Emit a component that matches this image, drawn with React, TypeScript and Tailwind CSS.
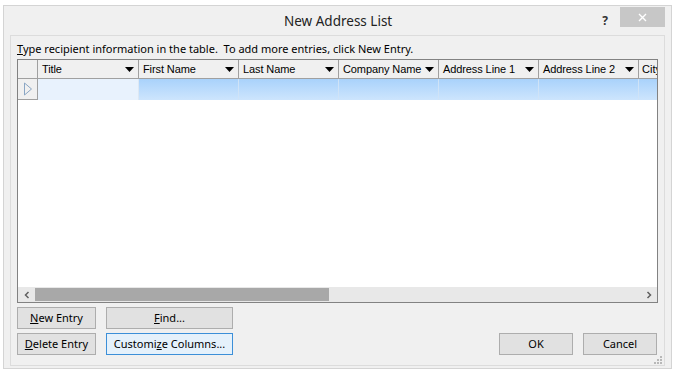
import React from "react";

const columns = [
  { name: "Title", w: "w-[101px]" },
  { name: "First Name", w: "w-[100px]" },
  { name: "Last Name", w: "w-[100px]" },
  { name: "Company Name", w: "w-[100px]" },
  { name: "Address Line 1", w: "w-[100px]" },
  { name: "Address Line 2", w: "w-[100px]" },
];

function DropArrow() {
  return (
    <svg width="9" height="5" viewBox="0 0 9 5" className="shrink-0">
      <path d="M0 0 H9 L4.5 5 Z" fill="#000" />
    </svg>
  );
}

function Btn({ children, w, focused }: { children: React.ReactNode; w: string; focused?: boolean }) {
  return (
    <button
      className={`${w} h-[22px] flex items-center justify-center text-[11px] text-black border ${
        focused ? "border-[#3c8fd8] bg-[#e5f1fb]" : "border-[#adadad] bg-[#e1e1e1]"
      }`}
    >
      {children}
    </button>
  );
}

export default function App() {
  return (
    <div className="w-[681px] h-[373px] bg-white pl-[3px] pt-[5px] font-['Noto_Sans','Open_Sans',sans-serif]">
      <div className="w-[669px] h-[364px] border border-[#d4d4d4] bg-[#f0f0f0] flex flex-col">
        {/* title bar */}
        <div className="h-[29px] flex items-start shrink-0">
          <div className="flex-1 pt-[5px] text-center text-[13.5px] text-[#222] pl-[70px]">New Address List</div>
          <div className="pt-[6px] pr-[6px] font-bold text-[12px] text-[#333] mr-[6px]">?</div>
          <div className="w-[45px] h-[20px] mt-[1px] mr-[6px] bg-[#c7c7c7] flex items-center justify-center">
            <svg width="9" height="9" viewBox="0 0 9 9">
              <path d="M1 1 L8 8 M8 1 L1 8" stroke="#fff" strokeWidth="1.4" />
            </svg>
          </div>
        </div>

        {/* inner panel */}
        <div className="mx-[6px] mb-[4px] flex-1 border border-[#dcdcdc] bg-[#f0f0f0] px-[6px] flex flex-col">
          <div className="h-[23px] pt-[6px] text-[11px] leading-[13px] text-black whitespace-nowrap">
            <span className="underline">T</span>ype recipient information in the table.&nbsp; To add more entries, click New Entry.
          </div>

          {/* table */}
          <div className="w-[641px] h-[244px] border border-[#828282] bg-white flex flex-col font-['Liberation_Sans',sans-serif] overflow-hidden">
            <div className="flex h-[19px] shrink-0 bg-[#f0f0f0]">
              <div className="w-[20px] shrink-0 border-r border-b border-[#a0a0a0]" />
              {columns.map((c) => (
                <div
                  key={c.name}
                  className={`${c.w} shrink-0 border-r border-b border-[#a0a0a0] flex items-center justify-between gap-[3px] pl-[4px] pr-[4px] text-[11px] tracking-[-0.1px] text-black whitespace-nowrap`}
                >
                  <span>{c.name}</span>
                  <DropArrow />
                </div>
              ))}
              <div className="flex-1 border-b border-[#a0a0a0] pl-[3px] text-[11px] leading-[19px] overflow-hidden whitespace-nowrap">City</div>
            </div>
            <div className="flex h-[21px] shrink-0">
              <div className="w-[20px] shrink-0 border-r border-b border-[#a0a0a0] bg-[#f0f0f0] flex items-center justify-center">
                <svg width="10" height="14" viewBox="0 0 10 14">
                  <path d="M1.5 1 L8.5 7 L1.5 13 Z" fill="none" stroke="#8aa6c4" strokeWidth="1" />
                </svg>
              </div>
              <div className="w-[101px] shrink-0 border-r border-[#dde8f3] bg-[#e8f2fd]" />
              {columns.slice(1).map((c) => (
                <div
                  key={c.name}
                  className={`${c.w} shrink-0 border-r border-[#cfe3f7] bg-gradient-to-b from-[#a9d2fb] to-[#cde5fd]`}
                />
              ))}
              <div className="flex-1 bg-gradient-to-b from-[#a9d2fb] to-[#cde5fd]" />
            </div>
            <div className="flex-1" />
            {/* horizontal scrollbar */}
            <div className="h-[15px] flex shrink-0 bg-[#e8e8e8]">
              <div className="w-[17px] flex items-center justify-center">
                <svg width="6" height="8" viewBox="0 0 6 8">
                  <path d="M4.5 1 L1.5 4 L4.5 7" fill="none" stroke="#606060" strokeWidth="1.5" />
                </svg>
              </div>
              <div className="w-[294px] my-[1px] bg-[#a8a8a8]" />
              <div className="flex-1" />
              <div className="w-[17px] flex items-center justify-center">
                <svg width="6" height="8" viewBox="0 0 6 8">
                  <path d="M1.5 1 L4.5 4 L1.5 7" fill="none" stroke="#606060" strokeWidth="1.5" />
                </svg>
              </div>
            </div>
          </div>

          {/* buttons */}
          <div className="flex mt-[4px]">
            <div className="flex flex-col gap-[4px]">
              <Btn w="w-[79px]">
                <span><span className="underline">N</span>ew Entry</span>
              </Btn>
              <Btn w="w-[79px]">
                <span><span className="underline">D</span>elete Entry</span>
              </Btn>
            </div>
            <div className="flex flex-col gap-[4px] ml-[10px]">
              <Btn w="w-[127px]">
                <span><span className="underline">F</span>ind...</span>
              </Btn>
              <Btn w="w-[127px]" focused>
                <span>Customi<span className="underline">z</span>e Columns...</span>
              </Btn>
            </div>
            <div className="flex-1 flex items-end justify-end gap-[10px] pr-[1px]">
              <Btn w="w-[74px]">OK</Btn>
              <Btn w="w-[74px]">Cancel</Btn>
            </div>
          </div>
          <div className="flex-1 flex items-end justify-end -mr-[5px]">
            <svg width="10" height="10" viewBox="0 0 10 10">
              <rect x="7" y="1" width="2" height="2" fill="#b8b8b8" />
              <rect x="4" y="4" width="2" height="2" fill="#b8b8b8" />
              <rect x="7" y="4" width="2" height="2" fill="#b8b8b8" />
              <rect x="1" y="7" width="2" height="2" fill="#b8b8b8" />
              <rect x="4" y="7" width="2" height="2" fill="#b8b8b8" />
              <rect x="7" y="7" width="2" height="2" fill="#b8b8b8" />
            </svg>
          </div>
        </div>
      </div>
    </div>
  );
}
